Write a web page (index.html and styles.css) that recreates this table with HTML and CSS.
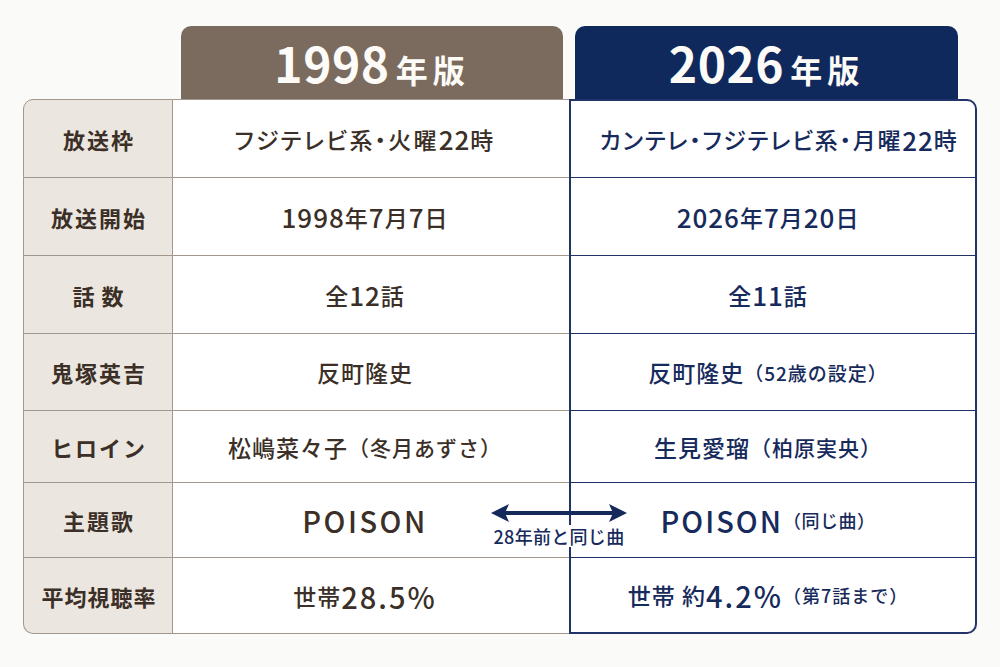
FILE: index.html
```html
<!DOCTYPE html>
<html lang="ja">
<head>
<meta charset="utf-8">
<title>1998年版 vs 2026年版</title>
<link rel="stylesheet" href="styles.css">
</head>
<body>
<div class="board">
  <div class="heads">
    <div class="spacer"></div>
    <div class="tab tab-old"><span class="year">1998</span><span class="ed">年版</span></div>
    <div class="tab tab-new"><span class="year">2026</span><span class="ed">年版</span></div>
  </div>
  <div class="table">
    <div class="cell label first">放送枠</div>
    <div class="cell old first">フジテレビ系・火曜<span class="d">22</span>時</div>
    <div class="cell new first">カンテレ・フジテレビ系・月曜<span class="d">22</span>時</div>

    <div class="cell label">放送開始</div>
    <div class="cell old"><span class="d">1998</span>年<span class="d">7</span>月<span class="d">7</span>日</div>
    <div class="cell new"><span class="d">2026</span>年<span class="d">7</span>月<span class="d">20</span>日</div>

    <div class="cell label wide">話数</div>
    <div class="cell old">全<span class="d">12</span>話</div>
    <div class="cell new">全<span class="d">11</span>話</div>

    <div class="cell label">鬼塚英吉</div>
    <div class="cell old">反町隆史</div>
    <div class="cell new">反町隆史<span class="sub">（52歳の設定）</span></div>

    <div class="cell label">ヒロイン</div>
    <div class="cell old">松嶋菜々子<span class="sub2">（冬月あずさ）</span></div>
    <div class="cell new">生見愛瑠<span class="sub2">（柏原実央）</span></div>

    <div class="cell label">主題歌</div>
    <div class="cell old song">
      <span class="title">POISON</span>
      <div class="bridge">
        <svg class="arrow" width="136" height="20" viewBox="0 0 136 20" aria-hidden="true">
          <line x1="12" y1="10" x2="124" y2="10" stroke="#15295b" stroke-width="4"/>
          <polygon points="0,10 18,1 14,10 18,19" fill="#15295b"/>
          <polygon points="136,10 118,1 122,10 118,19" fill="#15295b"/>
        </svg>
        <span class="note">28年前と同じ曲</span>
      </div>
    </div>
    <div class="cell new song"><span class="title">POISON</span><span class="sub tight">（同じ曲）</span></div>

    <div class="cell label last">平均視聴率</div>
    <div class="cell old last">世帯<span class="num">28.5%</span></div>
    <div class="cell new last">世帯&nbsp;約<span class="num">4.2%</span><span class="sub3">（第7話まで）</span></div>
  </div>
</div>
</body>
</html>
```

FILE: styles.css
```css
* { box-sizing: border-box; }

html, body {
  margin: 0;
  padding: 0;
}

body {
  background: #fafaf9;
  font-family: "Noto Sans CJK JP", "Noto Sans", sans-serif;
  width: 1000px;
  height: 667px;
  overflow: hidden;
}

.board {
  margin: 26px 0 0 23px;
  width: 954px;
}

.heads {
  display: grid;
  grid-template-columns: 150px 396px 408px;
  height: 73px;
}

.tab {
  display: flex;
  justify-content: center;
  align-items: baseline;
  padding-top: 4px;
  border-radius: 10px 10px 0 0;
  color: #fdfbf7;
  font-weight: 700;
}

.tab-old {
  background: #7b6b5e;
  margin: 0 6px 0 8px;
}

.tab-new {
  background: #10295d;
  margin: 0 19px 0 6px;
}

.tab .year {
  font-size: 48px;
  line-height: 64px;
  letter-spacing: 0.5px;
}

.tab .ed {
  font-size: 32px;
  letter-spacing: 5px;
  margin-left: 6px;
}

.table {
  display: grid;
  grid-template-columns: 150px 396px 408px;
  grid-template-rows: 79px 78px 78px 77px 72px 75px 76px;
}

.cell {
  display: flex;
  align-items: center;
  justify-content: center;
  white-space: nowrap;
}

.label {
  background: #ebe7e0;
  color: #3b2f27;
  font-size: 22px;
  font-weight: 700;
  letter-spacing: 2px;
  border-left: 1.5px solid #a1978c;
  border-right: 1.5px solid #a1978c;
  border-bottom: 1.5px solid #a1978c;
  padding-left: 2px;
}

.label.wide { letter-spacing: 7px; padding-left: 7px; }

.label.first {
  border-top: 1.5px solid #a1978c;
  border-top-left-radius: 10px;
}

.label.last {
  border-bottom-left-radius: 10px;
  letter-spacing: 1px;
}

.old {
  background: #fff;
  color: #3b2f27;
  font-size: 23px;
  font-weight: 500;
  letter-spacing: 1px;
  border-bottom: 1.5px solid #a1978c;
  padding-right: 12px;
}

.old.first {
  border-top: 1.5px solid #a1978c;
  font-feature-settings: "palt";
  letter-spacing: 2.2px;
}

.new {
  background: #fff;
  color: #172a5c;
  font-size: 23px;
  font-weight: 500;
  letter-spacing: 1px;
  border-left: 2px solid #22336a;
  border-right: 2px solid #22336a;
  border-bottom: 1.5px solid #22336a;
  padding-right: 10px;
}

.new.first {
  border-top: 2px solid #22336a;
  border-top-right-radius: 10px;
  padding-left: 12px;
  padding-right: 0;
  font-feature-settings: "palt";
  letter-spacing: 1.7px;
}

.new.last {
  border-bottom: 2px solid #22336a;
  border-bottom-right-radius: 10px;
}

.d {
  font-size: 26px;
  letter-spacing: 1px;
}

.sub {
  font-size: 19px;
  letter-spacing: 1px;
}

.sub.tight {
  font-size: 18px;
  letter-spacing: 0.5px;
}

.sub2 {
  font-size: 21px;
  letter-spacing: 1px;
}

.sub3 {
  font-size: 18px;
  letter-spacing: 1px;
}

.num {
  font-size: 29px;
  letter-spacing: 2px;
}

.song { position: relative; }

.song .title {
  font-size: 29px;
  letter-spacing: 2.5px;
}

.new.song .title { letter-spacing: 2px; }

.old.song { overflow: visible; z-index: 2; }

.bridge {
  position: absolute;
  top: 20px;
  right: -58px;
  display: flex;
  flex-direction: column;
  align-items: center;
  gap: 2px;
}

.arrow { display: block; }

.note {
  background: #fff;
  color: #172a5c;
  font-size: 18px;
  font-weight: 500;
  letter-spacing: 0.3px;
  line-height: 22px;
  padding: 0 2px;
}
```
